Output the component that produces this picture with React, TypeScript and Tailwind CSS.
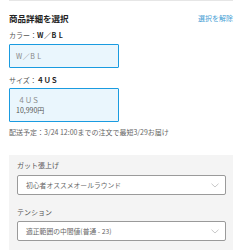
import { useState } from "react";

const font = { fontFamily: '"Noto Sans CJK JP", "Noto Sans", sans-serif' };

function Chevron() {
  return (
    <svg width="8" height="5" viewBox="0 0 8 5" className="shrink-0">
      <path d="M0.5 0.7 L4 4 L7.5 0.7" fill="none" stroke="#b0b0b0" strokeWidth="0.7" />
    </svg>
  );
}

function SelectBox({ value }: { value: string }) {
  return (
    <div className="flex items-center justify-between h-[20px] bg-white border border-[#9a9a9a] rounded-[2px] pl-[8px] pr-[6px]">
      <span className="text-[6.8px] leading-[10px] text-[#666]">{value}</span>
      <Chevron />
    </div>
  );
}

export default function App() {
  const [color] = useState("W／B L");
  const [size] = useState("４ＵＳ");

  return (
    <div style={font} className="w-[243px] h-[250px] overflow-hidden bg-white pl-[9px] pr-[10px] text-[#333]">
      <div className="h-px bg-[#e6e6e6]" />

      <div className="flex items-center justify-between mt-[11px] h-[12px]">
        <h3 className="text-[8.5px] leading-[12px] font-bold text-[#222]">商品詳細を選択</h3>
        <button className="text-[7px] leading-[10px] text-[#4a9fd5]">選択を解除</button>
      </div>

      <p className="mt-[6px] text-[7px] leading-[10px] text-[#555]">
        カラー：<span className="font-bold text-[#222] tracking-[0.5px]">{color}</span>
      </p>
      <div className="mt-[4px] w-[110px] h-[24px] flex items-center border border-[#1a9be0] bg-[#eaf6fd] rounded-[1px] pl-[6px]">
        <span className="text-[7px] leading-[10px] text-[#888] tracking-[0.5px]">{color}</span>
      </div>

      <p className="mt-[7px] text-[7px] leading-[10px] text-[#555]">
        サイズ：<span className="font-bold text-[#222]">{size}</span>
      </p>
      <div className="mt-[3px] w-[110px] h-[34px] flex flex-col justify-center border border-[#1a9be0] bg-[#eaf6fd] rounded-[1px] pl-[6px]">
        <span className="text-[7px] leading-[10px] text-[#888] pl-[2px]">{size}</span>
        <span className="text-[7px] leading-[10px] text-[#555]">10,990円</span>
      </div>

      <p className="mt-[5px] text-[7px] leading-[10px] text-[#666] whitespace-nowrap">
        配送予定：3/24 12:00までの注文で最短3/29お届け
      </p>

      <div className="mt-[18px] bg-[#f4f4f4] pl-[8px] pr-[7px] pt-[5px] pb-[10px]">
        <p className="text-[7px] leading-[10px] text-[#555]">ガット張上げ</p>
        <div className="mt-[5px]">
          <SelectBox value="初心者オススメオールラウンド" />
        </div>
        <p className="mt-[12px] text-[7px] leading-[10px] text-[#555]">テンション</p>
        <div className="mt-[4px]">
          <SelectBox value="適正範囲の中間値(普通 - 23)" />
        </div>
      </div>
    </div>
  );
}
